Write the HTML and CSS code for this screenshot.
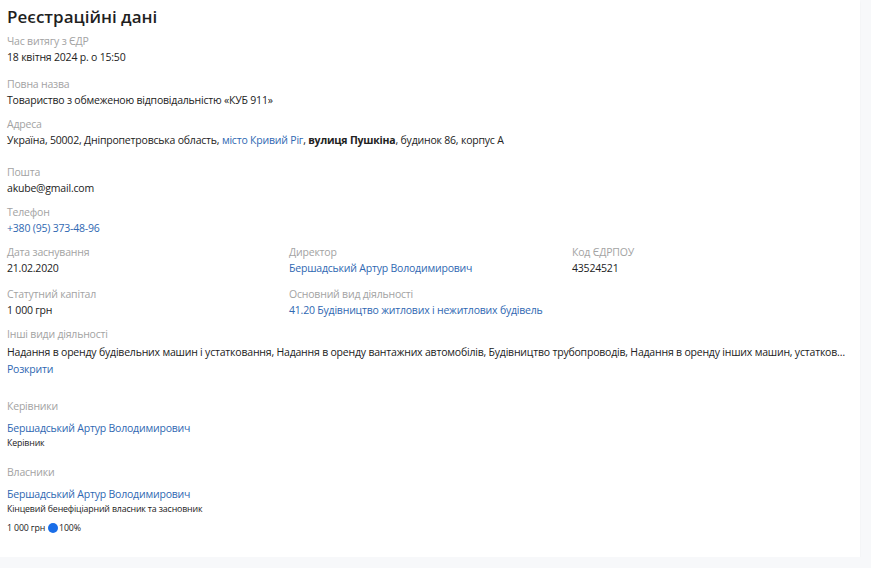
FILE: index.html
```html
<!DOCTYPE html>
<html>
<head>
  <title>Реєстраційні дані</title>
  <link rel="stylesheet" href="styles.css">
</head>
<body>
  <div id="card">
    <h1 class="title">Реєстраційні дані</h1>

    <div class="field">
      <div class="label">Час витягу з ЄДР</div>
      <div class="value">18 квітня 2024 р. о 15:50</div>
    </div>

    <div class="field gap-11">
      <div class="label">Повна назва</div>
      <div class="value">Товариство з обмеженою відповідальністю «КУБ 911»</div>
    </div>

    <div class="field">
      <div class="label">Адреса</div>
      <div class="value">Україна, 50002, Дніпропетровська область, <a href="#">місто Кривий Ріг</a>, <b>вулиця Пушкіна</b>, будинок 86, корпус А</div>
    </div>

    <div class="field gap-16">
      <div class="label">Пошта</div>
      <div class="value">akube@gmail.com</div>
    </div>

    <div class="field">
      <div class="label">Телефон</div>
      <div class="value"><a href="#">+380 (95) 373-48-96</a></div>
    </div>

    <div class="grid">
      <div class="field">
        <div class="label">Дата заснування</div>
        <div class="value">21.02.2020</div>
      </div>
      <div class="field">
        <div class="label">Директор</div>
        <div class="value"><a href="#">Бершадський Артур Володимирович</a></div>
      </div>
      <div class="field">
        <div class="label">Код ЄДРПОУ</div>
        <div class="value">43524521</div>
      </div>
      <div class="field gap-10">
        <div class="label">Статутний капітал</div>
        <div class="value">1 000 грн</div>
      </div>
      <div class="field gap-10">
        <div class="label">Основний вид діяльності</div>
        <div class="value"><a href="#">41.20 Будівництво житлових і нежитлових будівель</a></div>
      </div>
    </div>

    <div class="field">
      <div class="label">Інші види діяльності</div>
      <div class="value clip">Надання в оренду будівельних машин і устатковання, Надання в оренду вантажних автомобілів, Будівництво трубопроводів, Надання в оренду інших машин, устатковання та товарів. н. в. і. у., Будівництво доріг і автострад</div>
      <a href="#" class="more">Розкрити</a>
    </div>

    <div class="section">
      <div class="label">Керівники</div>
      <div class="person">
        <a href="#">Бершадський Артур Володимирович</a>
        <div class="role">Керівник</div>
      </div>
    </div>

    <div class="section owners">
      <div class="label">Власники</div>
      <div class="person">
        <a href="#">Бершадський Артур Володимирович</a>
        <div class="role">Кінцевий бенефіціарний власник та засновник</div>
        <div class="share">1 000 грн <span class="dot"></span>100%</div>
      </div>
    </div>
  </div>
</body>
</html>
```

FILE: styles.css
```css
body {
  margin: 0;
  padding: 0;
  background-color: #f7f8fa;
  font-family: "Open Sans", "Noto Sans", sans-serif;
  font-size: 10.5px;
  letter-spacing: -0.2px;
  color: #222;
}

#card {
  width: 853px;
  height: 552px;
  padding: 5px 0 0 7px;
  background-color: #fff;
  box-shadow: 0 2px 2px rgba(0, 0, 0, 0.04);
}

a {
  color: #2f68b2;
  text-decoration: none;
}

.title {
  margin: 0 0 4px;
  font-size: 17px;
  line-height: 24px;
  font-weight: 600;
  letter-spacing: 0;
  color: #1f1f1f;
}

.field {
  margin-top: 8px;
}

.field:first-of-type {
  margin-top: 0;
}

.gap-10 { margin-top: 10px; }
.gap-11 { margin-top: 11px; }
.gap-16 { margin-top: 16px; }

.label {
  line-height: 16px;
  color: #a3a3a3;
}

.value {
  line-height: 16px;
}

.value b {
  font-weight: 700;
}

.grid {
  display: grid;
  grid-template-columns: 282px 283px 282px;
}

.grid .field {
  margin-top: 8px;
}

.grid .gap-10 {
  margin-top: 10px;
}

.clip {
  width: 840px;
  margin-top: 2px;
  white-space: nowrap;
  overflow: hidden;
  text-overflow: ellipsis;
}

.more {
  display: block;
  line-height: 16px;
  margin-top: 1px;
}

.section {
  margin-top: 21px;
}

.section.owners {
  margin-top: 14px;
}

.person {
  margin-top: 6px;
}

.person a {
  display: block;
  line-height: 16px;
}

.role {
  font-size: 8.8px;
  letter-spacing: -0.15px;
  line-height: 14px;
}

.share {
  margin-top: 4px;
  font-size: 8.8px;
  letter-spacing: -0.15px;
  line-height: 16px;
  display: flex;
  align-items: center;
}

.dot {
  display: inline-block;
  width: 10px;
  height: 10px;
  margin: 0 1px 0 3px;
  border-radius: 50%;
  background-color: #1a6ee8;
}
```
